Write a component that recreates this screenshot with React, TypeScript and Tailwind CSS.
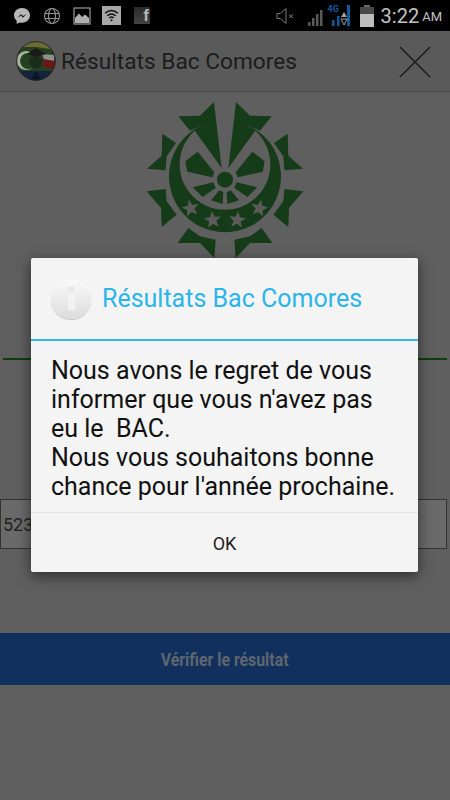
const starPoints = (cx: number, cy: number, r: number, rot = 0) => {
  const pts: string[] = [];
  for (let i = 0; i < 10; i++) {
    const rad = i % 2 === 0 ? r : r * 0.42;
    const a = ((-90 + rot + i * 36) * Math.PI) / 180;
    pts.push(`${cx + rad * Math.cos(a)},${cy + rad * Math.sin(a)}`);
  }
  return pts.join(" ");
};

const halfShapes = [
  "267,27 290,225 208,112 237,95 195,113 160,70 225,68",
  "112,122 153,150 125,190 122,232 66,227 110,188",
  "65,295 122,288 125,325 155,365 110,402 108,345",
  "190,405 158,450 225,450 268,495 272,440 225,430",
  "218,176 268,238 262,253 187,236 181,205",
  "203,283 265,268 272,285 233,312",
  "258,322 283,292 295,297 293,333",
];

function Emblem() {
  return (
    <svg width="200" height="175" viewBox="0 0 600 525">
      <g fill="#163b18">
        {halfShapes.map((p) => (
          <g key={p}>
            <polygon points={p} />
            <polygon points={p} transform="matrix(-1 0 0 1 600 0)" />
          </g>
        ))}
        <path d="M235 95A168 168 0 1 0 365 95A136 136 0 1 1 235 95Z" />
        <circle cx="300" cy="260" r="24" />
      </g>
      <g fill="#5b5b5b">
        <polygon points={starPoints(197, 346, 27, -12)} />
        <polygon points={starPoints(263, 381, 27, -6)} />
        <polygon points={starPoints(337, 381, 27, 6)} />
        <polygon points={starPoints(403, 346, 27, 12)} />
      </g>
    </svg>
  );
}

function AppIcon() {
  return (
    <svg width="40" height="40" viewBox="0 0 40 40" className="shrink-0">
      <defs>
        <clipPath id="round">
          <circle cx="20" cy="20" r="19.5" />
        </clipPath>
      </defs>
      <g clipPath="url(#round)">
        <rect width="40" height="40" fill="#24401f" />
        <path d="M8 0H36L34 8L20 6L8 6Z" fill="#6f6a35" />
        <path d="M26 13L38 14V20L28 18Z" fill="#8f8f8f" />
        <path d="M26 19L40 20V28L28 26Z" fill="#6b1717" />
        <rect y="30" width="40" height="10" fill="#14233f" />
        <path d="M11 10a9.500 9.500 0 1 0 5 17a8 8 0 1 1 0-14a9.500 9.500 0 0 0-5-3Z" fill="#a9b2a0" />
        <circle cx="20" cy="21" r="6.500" fill="#1a2c1c" />
        <path d="M11 13L20 7L30 13L20 16Z" fill="#1b1b1b" />
        <path d="M14 40L20 30L26 40Z" fill="#0b1527" />
      </g>
      <circle cx="20" cy="20" r="19.300" fill="none" stroke="#2b2b2b" strokeWidth="1" />
    </svg>
  );
}

function StatusLeft() {
  return (
    <div className="flex items-center">
      <svg width="18" height="18" viewBox="0 0 18 18" className="ml-[13px]">
        <path d="M9 1C4.500 1 1 4.200 1 8.300c0 2.200 1 4.100 2.700 5.400V17l2.900-1.600c.8.200 1.600.3 2.400.3 4.500 0 8-3.200 8-7.400S13.500 1 9 1Z" fill="#b8b8b8" />
        <path d="M4.300 10.700L8 7l2 2 3.700-2.200-3.700 3.900-2-2Z" fill="#222" />
      </svg>
      <svg width="18" height="18" viewBox="0 0 18 18" className="ml-[12px]" fill="none" stroke="#8f8f8f" strokeWidth="1.200">
        <circle cx="9" cy="9" r="7.500" />
        <ellipse cx="9" cy="9" rx="3.500" ry="7.500" />
        <path d="M2 6.500H16M2 11.500H16" />
      </svg>
      <svg width="18" height="18" viewBox="0 0 18 18" className="ml-[12px]">
        <rect x="1" y="1" width="16" height="16" fill="none" stroke="#9a9a9a" strokeWidth="1.200" />
        <path d="M2 16V11L6 6.500L9 10L12 7.500L16 11V16Z" fill="#b0b0b0" />
      </svg>
      <div className="ml-[11px] flex h-[19px] w-[19px] items-center justify-center bg-[#a8a8a8]">
        <svg width="15" height="13" viewBox="0 0 15 13" fill="none" stroke="#111" strokeWidth="1.400">
          <path d="M1 4.300C5 .8 10 .8 14 4.300" />
          <path d="M3.200 6.800C5.800 4.500 9.200 4.500 11.800 6.800" />
          <path d="M5.300 9.100C6.500 8 8.500 8 9.700 9.100" />
          <circle cx="7.500" cy="11.300" r="1" fill="#111" stroke="none" />
        </svg>
      </div>
      <div className="ml-[13px] flex h-[17px] w-[16px] items-end justify-end bg-gradient-to-b from-[#2a2a2a] to-[#444] pr-[1px] font-['Liberation_Sans',sans-serif] text-[17px] leading-[17px] font-bold text-[#b5b5b5]">
        f
      </div>
    </div>
  );
}

function StatusRight() {
  return (
    <div className="flex items-center">
      <svg width="20" height="18" viewBox="0 0 20 18" fill="none" stroke="#7a7a7a" strokeWidth="1">
        <path d="M1 6.500V11.500H4.500L10 16.500V1.500L4.500 6.500Z" />
        <path d="M13 7.500L17 11M17 7.500L13 11" />
      </svg>
      <svg width="18" height="22" viewBox="0 0 18 22" className="ml-[11px]" fill="#5a5a5a">
        <rect x="1" y="17" width="2.500" height="4" />
        <rect x="5" y="13" width="2.500" height="8" />
        <rect x="9" y="9" width="2.500" height="12" />
        <rect x="13" y="5" width="2.500" height="16" />
      </svg>
      <div className="relative ml-[3px] h-[22px] w-[23px]">
        <span className="absolute top-[-2px] left-0 font-['Roboto',sans-serif] text-[9px] leading-[12px] font-bold text-[#0d5a9c]">
          4G
        </span>
        <svg width="23" height="22" viewBox="0 0 23 22" className="absolute top-0 left-0">
          <rect x="4" y="15" width="2.500" height="6" fill="#0d5a9c" />
          <rect x="9" y="11" width="2.500" height="10" fill="#0d5a9c" />
          <rect x="19" y="0" width="3" height="21" fill="#0d5a9c" />
          <path d="M16 7L19 12H13Z" fill="#a0a0a0" />
          <path d="M16 20L13 14H19Z" fill="none" stroke="#a0a0a0" />
        </svg>
      </div>
      <div className="ml-[9px] flex h-[22px] w-[14px] flex-col items-center">
        <div className="h-[2px] w-[6px] bg-[#666]" />
        <div className="h-[7px] w-[14px] bg-[#4a4a4a]" />
        <div className="h-[13px] w-[14px] bg-[#bdbdbd]" />
      </div>
      <span className="ml-[7px] font-['Roboto',sans-serif] text-[20px] leading-none text-[#c4c4c4]">3:22</span>
      <span className="mt-[2px] mr-[8px] ml-[3px] font-['Roboto',sans-serif] text-[13px] leading-none text-[#c4c4c4]">AM</span>
    </div>
  );
}

function ResultDialog() {
  return (
    <div className="absolute top-[258px] left-[31px] h-[314px] w-[387px] rounded-[2px] bg-[#f4f4f4] shadow-[0_4px_14px_rgba(0,0,0,0.55)]">
      <div className="flex h-[81px] items-center pl-[20px]">
        <div className="relative flex h-[40px] w-[40px] flex-col items-center justify-center rounded-full bg-gradient-to-b from-[#fafafa] to-[#dcdcdc] shadow-[0_1px_1px_rgba(0,0,0,0.2)]">
          <div className="h-[4px] w-[6px] bg-[#e6e6e6]" />
          <div className="mt-[3px] h-[16px] w-[7px] bg-[#f2f2f2]" />
        </div>
        <h1 className="ml-[11px] text-[25px] leading-none font-normal text-[#2bb5ea]">Résultats Bac Comores</h1>
      </div>
      <div className="h-[2px] bg-[#33b5e5]" />
      <p className="mt-[15px] pl-[20px] text-[25px] leading-[29px] text-[#111]">
        Nous avons le regret de vous
        <br />
        informer que vous n'avez pas
        <br />
        eu le &nbsp;BAC.
        <br />
        Nous vous souhaitons bonne
        <br />
        chance pour l'année prochaine.
      </p>
      <div className="mt-[11px] h-[1px] bg-[#e3e3e3]" />
      <div className="flex h-[60px] items-center justify-center text-[18px] text-[#222]">OK</div>
    </div>
  );
}

export default function App() {
  return (
    <div className="relative h-[800px] w-[450px] overflow-hidden bg-[#5f5f5f] font-['Roboto',sans-serif]">
      <div className="flex h-[31px] items-center justify-between bg-black">
        <StatusLeft />
        <StatusRight />
      </div>
      <div className="flex h-[61px] items-center border-b border-[#4c4c4c] bg-[#5a5a5a] pl-[16px]">
        <AppIcon />
        <span className="mt-[2px] ml-[5px] text-[22.700px] text-[#1c1c1c]">Résultats Bac Comores</span>
        <svg width="32" height="32" viewBox="0 0 32 32" className="mt-[2px] mr-[19px] ml-auto" stroke="#1c1c1c" strokeWidth="1.500">
          <path d="M1 1L31 31M31 1L1 31" />
        </svg>
      </div>
      <div className="flex justify-center pt-[1px] pb-[90px]">
        <Emblem />
      </div>
      <div className="mx-[3px] h-[2px] bg-[#0f3d0f]" />
      <div className="mt-[139px] mr-[3px] flex h-[50px] items-center border border-[#333] bg-[#6a6a6a] pl-[2px] text-[18px] text-[#222]">
        523
      </div>
      <div className="mt-[84px] flex h-[52px] items-center justify-center bg-[#11305e]">
        <span className="inline-block scale-x-[0.88] text-[18px] font-bold text-[#5f6670]">Vérifier le résultat</span>
      </div>
      <ResultDialog />
    </div>
  );
}
